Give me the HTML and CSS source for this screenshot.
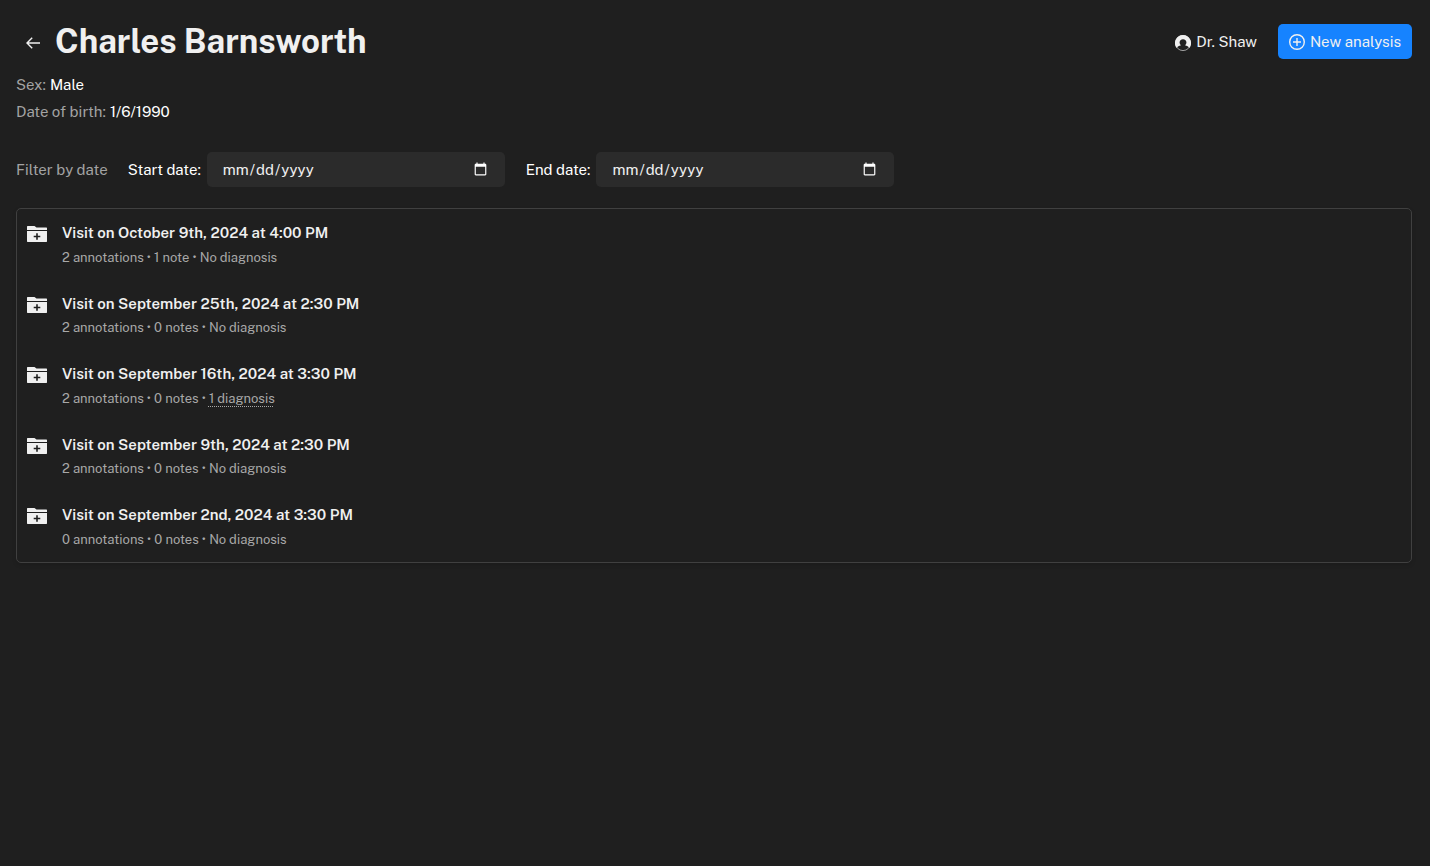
FILE: index.html
```html
<!DOCTYPE html>
<html lang="en">
<head>
<meta charset="utf-8">
<title>Charles Barnsworth</title>
<link rel="stylesheet" href="styles.css">
</head>
<body>
<svg class="symbols" aria-hidden="true">
  <symbol id="folder" viewBox="0 0 20 16"><path fill="currentColor" fill-rule="evenodd" d="M0 .5L.5 0H7.500L9.500 1.600H19.500L20 2.100V4H0zM0 5h20v10.500l-.5.5H.5l-.5-.5zM9.200 7.200v2.500H6.700v1.600h2.500v2.500h1.600v-2.500h2.500V9.700h-2.500V7.200z"/></symbol>
</svg>
<header class="header">
  <div class="title">
    <button class="back" type="button" aria-label="Back"><svg class="arrow" viewBox="0 0 14 12" fill="none" stroke="currentColor" stroke-width="1.400"><path d="M14 6H1M6.200.7L1 6l5.200 5.300"/></svg></button>
    <h1 class="name">Charles Barnsworth</h1>
  </div>
  <div class="actions">
    <div class="user"><svg class="action-icon user-icon" viewBox="0 0 16 16"><circle cx="8" cy="8" r="7.600" fill="none" stroke="currentColor" stroke-width=".6"/><path fill="currentColor" fill-rule="evenodd" d="M8 0a8 8 0 0 1 6.300 12.900C13.500 11.500 12 10.800 10 10.300a3.400 3.400 0 1 0-4 0C4 10.800 2.500 11.500 1.700 12.900A8 8 0 0 1 8 0z"/></svg><span>Dr. Shaw</span></div>
    <button class="primary" type="button"><svg class="action-icon" viewBox="0 0 16 16" fill="none" stroke="currentColor" stroke-width="1.400"><circle cx="8" cy="8" r="7.300"/><path d="M8 4v8M4 8h8"/></svg><span>New analysis</span></button>
  </div>
</header>
<main>
  <dl class="details">
    <div class="detail"><dt>Sex:</dt><dd>Male</dd></div>
    <div class="detail"><dt>Date of birth:</dt><dd>1/6/1990</dd></div>
  </dl>
  <form class="filters">
    <span class="filter-title">Filter by date</span>
    <div class="field field-start"><label for="start">Start date:</label><input class="date" id="start" type="date"></div>
    <div class="field field-end"><label for="end">End date:</label><input class="date" id="end" type="date"></div>
  </form>
  <ul class="visits">
    <li class="visit"><svg class="folder"><use href="#folder"/></svg><div class="text"><h2 class="heading">Visit on October 9th, 2024 at 4:00 PM</h2><p class="meta">2 annotations • 1 note • No diagnosis</p></div></li>
    <li class="visit"><svg class="folder"><use href="#folder"/></svg><div class="text"><h2 class="heading">Visit on September 25th, 2024 at 2:30 PM</h2><p class="meta">2 annotations • 0 notes • No diagnosis</p></div></li>
    <li class="visit"><svg class="folder"><use href="#folder"/></svg><div class="text"><h2 class="heading">Visit on September 16th, 2024 at 3:30 PM</h2><p class="meta">2 annotations • 0 notes • <span class="diagnosis">1 diagnosis</span></p></div></li>
    <li class="visit"><svg class="folder"><use href="#folder"/></svg><div class="text"><h2 class="heading">Visit on September 9th, 2024 at 2:30 PM</h2><p class="meta">2 annotations • 0 notes • No diagnosis</p></div></li>
    <li class="visit"><svg class="folder"><use href="#folder"/></svg><div class="text"><h2 class="heading">Visit on September 2nd, 2024 at 3:30 PM</h2><p class="meta">0 annotations • 0 notes • No diagnosis</p></div></li>
  </ul>
</main>
</body>
</html>
```

FILE: styles.css
```css
* { box-sizing: border-box; margin: 0; padding: 0; }
body {
  padding: 24px 18px 24px 16px;
  background: #1f1f1f;
  color: #f0f0f0;
  color-scheme: dark;
  font-family: "Public Sans", "Inter", sans-serif;
  font-size: 15px;
  line-height: 27px;
}
button, input { font: inherit; color: inherit; border: 0; }
svg { flex: none; }
.symbols { display: none; }
.header, .title, .actions, .user, .primary, .filters, .field { display: flex; align-items: center; }
.header { justify-content: space-between; height: 35px; }
.title { gap: 5px; }
.back { display: flex; align-items: center; justify-content: center; width: 34px; height: 34px; background: none; }
.arrow { width: 14px; height: 12px; margin-top: 2px; }
.name { font-size: 33px; font-weight: 700; line-height: 35px; }
.actions { gap: 21px; }
.user { gap: 5px; }
.action-icon { width: 16px; height: 16px; margin-top: 1px; }
.user-icon { margin-top: 2px; }
.primary { gap: 5px; height: 35px; padding: 0 11px; border-radius: 5px; background: #1683ff; }
.details { margin-top: 12px; }
.detail { display: flex; gap: 4px; }
dt, .filter-title { color: #a3a3a3; }
dd, label { color: #fff; }
.filters { margin-top: 27px; }
.field { gap: 6px; }
.field-start { margin-left: 20px; }
.field-end { margin-left: 21px; }
.date { width: 298px; height: 35px; padding: 0 15px; border-radius: 5px; background: #2b2b2b; }
.visits { margin-top: 21px; border: 1px solid #404040; border-radius: 5px; list-style: none; box-shadow: 0 2px 4px #00000020; }
.visit { display: flex; gap: 15px; padding: 11px 10px; line-height: 1.7; }
.folder { width: 20px; height: 16px; margin-top: 6px; }
.text { display: grid; gap: 1px; }
.heading { font-size: 15px; font-weight: 600; }
.meta { color: #a8a8a8; font-size: 13px; }
.diagnosis { text-decoration: underline dotted 1px; text-underline-offset: 3px; text-decoration-skip-ink: none; }
```
